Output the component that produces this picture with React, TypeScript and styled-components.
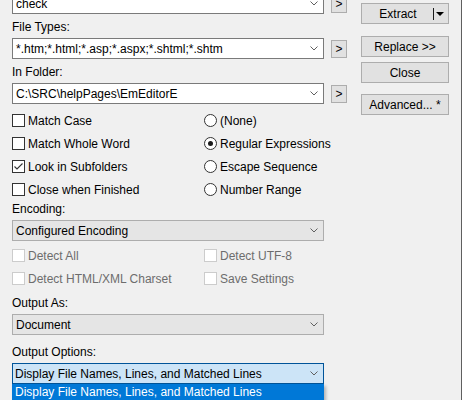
import React from 'react';
import styled, { createGlobalStyle } from 'styled-components';

const GlobalStyle = createGlobalStyle`
  body {
    margin: 0;
    background: #f0f0f0;
    font-family: "Liberation Sans", Arial, sans-serif;
    font-size: 12px;
    color: #000;
  }
`;

const Window = styled.div`
  width: 462px;
  height: 400px;
  box-sizing: border-box;
  border-right: 1px solid #5f5f5f;
  background: #f0f0f0;
  overflow: hidden;
  display: flex;
  align-items: flex-start;
`;

const LeftColumn = styled.div`
  margin-top: -26px;
  padding-left: 12px;
  width: 335px;
  display: flex;
  flex-direction: column;
`;

const Field = styled.div<{ $top?: number }>`
  display: flex;
  flex-direction: column;
  gap: 3px;
  margin-top: ${(p) => p.$top ?? 0}px;
  position: relative;
`;

const Label = styled.div`
  height: 16px;
  line-height: 16px;
`;

const ComboRow = styled.div`
  display: flex;
  align-items: center;
  gap: 7px;
`;

type ComboKind = 'edit' | 'list' | 'focus';

const Combo = styled.div<{ $kind: ComboKind }>`
  flex: 0 0 312px;
  width: 312px;
  height: 21px;
  box-sizing: border-box;
  display: flex;
  align-items: center;
  justify-content: space-between;
  padding: 0 5px 0 ${(p) => (p.$kind === 'focus' ? 2 : 3)}px;
  border: 1px solid
    ${(p) => (p.$kind === 'edit' ? '#7a7a7a' : p.$kind === 'focus' ? '#005499' : '#adadad')};
  background: ${(p) => (p.$kind === 'edit' ? '#ffffff' : p.$kind === 'focus' ? '#cce4f7' : '#e5e5e5')};
  white-space: nowrap;
`;

const MoreButton = styled.div`
  width: 16px;
  height: 18px;
  box-sizing: border-box;
  border: 1px solid #adadad;
  background: #e1e1e1;
  display: flex;
  align-items: center;
  justify-content: center;
  font-size: 12px;
`;

const Options = styled.div<{ $top: number }>`
  margin-top: ${(p) => p.$top}px;
  display: grid;
  grid-template-columns: 192px 1fr;
  grid-auto-rows: 23px;
`;

const Option = styled.label<{ $disabled?: boolean }>`
  display: flex;
  align-items: center;
  gap: 3px;
  color: ${(p) => (p.$disabled ? '#6d6d6d' : '#000')};
  white-space: nowrap;
`;

const Box = styled.span<{ $disabled?: boolean }>`
  width: 13px;
  height: 13px;
  box-sizing: border-box;
  border: 1px solid ${(p) => (p.$disabled ? '#cccccc' : '#333333')};
  background: #fff;
  display: flex;
  align-items: center;
  justify-content: center;
`;

const Radio = styled.span`
  width: 13px;
  height: 13px;
  box-sizing: border-box;
  border: 1px solid #333333;
  border-radius: 50%;
  background: #fff;
  display: flex;
  align-items: center;
  justify-content: center;
`;

const Dot = styled.span`
  width: 5px;
  height: 5px;
  border-radius: 50%;
  background: #1a1a1a;
`;

const DropList = styled.div`
  position: absolute;
  left: 0;
  top: 100%;
  width: 312px;
  box-sizing: border-box;
  background: #fff;
  box-shadow: 2px 2px 3px rgba(0, 0, 0, 0.25);
`;

const DropItem = styled.div<{ $selected?: boolean }>`
  height: 17px;
  line-height: 17px;
  padding-left: 3px;
  background: ${(p) => (p.$selected ? '#0078d7' : '#fff')};
  color: ${(p) => (p.$selected ? '#fff' : '#000')};
  white-space: nowrap;
`;

const RightColumn = styled.div`
  margin-left: 14px;
  padding-top: 3px;
  width: 88px;
  display: flex;
  flex-direction: column;
`;

const Button = styled.div<{ $top?: number }>`
  height: 21px;
  margin-top: ${(p) => p.$top ?? 0}px;
  box-sizing: border-box;
  border: 1px solid #adadad;
  background: #e1e1e1;
  display: flex;
  align-items: center;
  justify-content: center;
  white-space: nowrap;
`;

const SplitButton = styled(Button)`
  justify-content: flex-start;
`;

const SplitLabel = styled.span`
  flex: 1;
  text-align: center;
  padding-left: 1px;
`;

const SplitDivider = styled.span`
  width: 1px;
  height: 12px;
  background: #1a1a1a;
  margin-right: 2px;
`;

const SplitArrow = styled.span`
  width: 12px;
  display: flex;
  align-items: center;
`;

const Chevron = () => (
  <svg width="8" height="5" viewBox="0 0 8 5">
    <polyline points="0.5,0.5 4,4 7.5,0.5" fill="none" stroke="#606060" strokeWidth="1" />
  </svg>
);

const Check = () => (
  <svg width="11" height="11" viewBox="0 0 11 11">
    <polyline points="1.5,5.5 4,8 9.5,2.5" fill="none" stroke="#333" strokeWidth="1.1" />
  </svg>
);

const ComboField = ({
  label,
  value,
  kind = 'edit',
  more = false,
  top,
  children,
}: {
  label: string;
  value: string;
  kind?: ComboKind;
  more?: boolean;
  top?: number;
  children?: React.ReactNode;
}) => (
  <Field $top={top}>
    <Label>{label}</Label>
    <ComboRow>
      <Combo $kind={kind}>
        <span>{value}</span>
        <Chevron />
      </Combo>
      {more && <MoreButton>&gt;</MoreButton>}
    </ComboRow>
    {children}
  </Field>
);

const CheckOption = ({ label, checked, disabled }: { label: string; checked?: boolean; disabled?: boolean }) => (
  <Option $disabled={disabled}>
    <Box $disabled={disabled}>{checked && <Check />}</Box>
    {label}
  </Option>
);

const RadioOption = ({ label, selected }: { label: string; selected?: boolean }) => (
  <Option>
    <Radio>{selected && <Dot />}</Radio>
    {label}
  </Option>
);

export default function App() {
  return (
    <Window>
      <GlobalStyle />
      <LeftColumn>
        <ComboField label="Find:" value="check" more />
        <ComboField label="File Types:" value="*.htm;*.html;*.asp;*.aspx;*.shtml;*.shtm" more top={5} />
        <ComboField label="In Folder:" value="C:\SRC\helpPages\EmEditorE" more top={5} />

        <Options $top={5}>
          <CheckOption label="Match Case" />
          <RadioOption label="(None)" />
          <CheckOption label="Match Whole Word" />
          <RadioOption label="Regular Expressions" selected />
          <CheckOption label="Look in Subfolders" checked />
          <RadioOption label="Escape Sequence" />
          <CheckOption label="Close when Finished" />
          <RadioOption label="Number Range" />
        </Options>

        <ComboField label="Encoding:" value="Configured Encoding" kind="list" />

        <Options $top={3}>
          <CheckOption label="Detect All" disabled />
          <CheckOption label="Detect UTF-8" disabled />
          <CheckOption label="Detect HTML/XML Charset" disabled />
          <CheckOption label="Save Settings" disabled />
        </Options>

        <ComboField label="Output As:" value="Document" kind="list" top={5} />

        <ComboField label="Output Options:" value="Display File Names, Lines, and Matched Lines" kind="focus" top={9}>
          <DropList>
            <DropItem $selected>Display File Names, Lines, and Matched Lines</DropItem>
            <DropItem>Display File Names Only</DropItem>
          </DropList>
        </ComboField>
      </LeftColumn>

      <RightColumn>
        <SplitButton>
          <SplitLabel>Extract</SplitLabel>
          <SplitDivider />
          <SplitArrow>
            <svg width="8" height="4" viewBox="0 0 8 4">
              <polygon points="0,0 8,0 4,4" fill="#000" />
            </svg>
          </SplitArrow>
        </SplitButton>
        <Button $top={12}>Replace &gt;&gt;</Button>
        <Button $top={5}>Close</Button>
        <Button $top={11}>Advanced... *</Button>
      </RightColumn>
    </Window>
  );
}
